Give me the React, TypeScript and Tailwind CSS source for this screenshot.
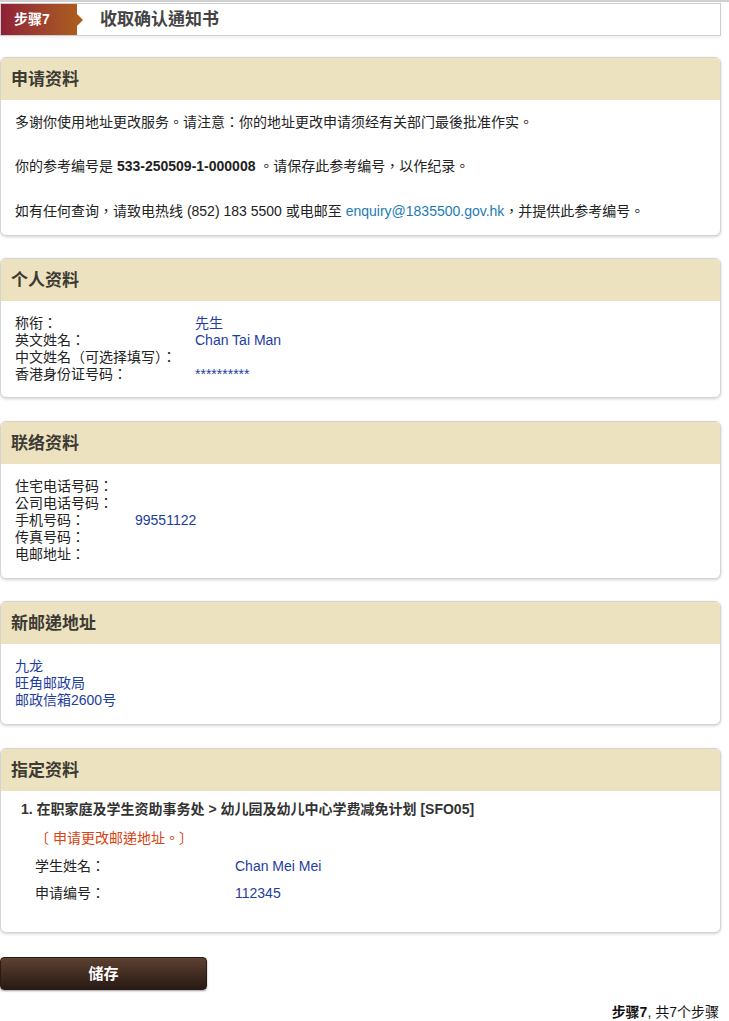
import React from "react";

const font = { fontFamily: '"Liberation Sans", Arial, "Noto Sans CJK TC", "Noto Sans CJK SC", sans-serif' };

function Card({ title, children, bodyClass }: { title: string; children: React.ReactNode; bodyClass?: string }) {
  return (
    <div className="rounded-[6px] border border-[#d4d4d4] bg-white shadow-[0_1px_3px_rgba(0,0,0,0.18)] overflow-hidden">
      <div className="h-[42px] bg-[#ece2bf] flex items-center pl-[10px] text-[17px] font-bold text-[#3d3a33]">{title}</div>
      <div className={bodyClass ?? "px-[14px] py-[14px]"}>{children}</div>
    </div>
  );
}

function Row({ label, value, w }: { label: string; value?: string; w: string }) {
  return (
    <div className="flex h-[17px] items-center">
      <div className={w + " shrink-0 text-[#222]"}>{label}</div>
      <div className="text-[#1d3da0]">{value}</div>
    </div>
  );
}

export default function App() {
  return (
    <div style={font} className="w-[721px] bg-white text-[14px] text-[#222] leading-[17px]">
      <div className="h-[2px] w-[729px] bg-[#d0d0d0]" />
      <div className="mt-[1px] h-[33px] border border-[#cfcfcf] flex items-stretch shadow-[0_2px_3px_rgba(0,0,0,0.06)]">
        <div className="relative w-[76px] bg-gradient-to-r from-[#8e1f36] to-[#ab5c1d] flex items-center pl-[13px] text-white font-bold text-[14px]">
          步骤7
          <div className="absolute right-[-6px] top-[10px] w-0 h-0 border-t-[6px] border-b-[6px] border-l-[6px] border-t-transparent border-b-transparent border-l-[#ab5c1d]" />
        </div>
        <div className="flex items-center pl-[23px] text-[17px] font-bold text-[#444]">收取确认通知书</div>
      </div>

      <div className="mt-[21px] flex flex-col gap-[22px]">
        <Card title="申请资料" bodyClass="px-[14px] pt-[14px] pb-[15px]">
          <p>多谢你使用地址更改服务。请注意：你的地址更改申请须经有关部门最後批准作实。</p>
          <p className="mt-[27px]">
            你的参考编号是 <span className="font-bold">533-250509-1-000008</span> 。请保存此参考编号，以作纪录。
          </p>
          <p className="mt-[28px]">
            如有任何查询，请致电热线 (852) 183 5500 或电邮至 <span className="text-[#1b7bb5]">enquiry@1835500.gov.hk</span>，并提供此参考编号。
          </p>
        </Card>

        <Card title="个人资料">
          <Row label="称衔：" value="先生" w="w-[180px]" />
          <Row label="英文姓名：" value="Chan Tai Man" w="w-[180px]" />
          <Row label="中文姓名（可选择填写）：" w="w-[180px]" />
          <Row label="香港身份证号码：" value="**********" w="w-[180px]" />
        </Card>

        <div className="mt-[1px]">
          <Card title="联络资料" bodyClass="px-[14px] pt-[14px] pb-[15px]">
            <Row label="住宅电话号码：" w="w-[120px]" />
            <Row label="公司电话号码：" w="w-[120px]" />
            <Row label="手机号码：" value="99551122" w="w-[120px]" />
            <Row label="传真号码：" w="w-[120px]" />
            <Row label="电邮地址：" w="w-[120px]" />
          </Card>
        </div>

        <Card title="新邮递地址" bodyClass="px-[14px] pt-[14px] pb-[15px]">
          <div className="text-[#1d3da0]">
            <div>九龙</div>
            <div>旺角邮政局</div>
            <div>邮政信箱2600号</div>
          </div>
        </Card>

        <div className="mt-[1px]">
          <Card title="指定资料" bodyClass="pl-[20px] pt-[10px] pb-[30px]">
            <div className="font-bold text-[#333]">1. 在职家庭及学生资助事务处 &gt; 幼儿园及幼儿中心学费减免计划 [SFO05]</div>
            <div className="mt-[12px] pl-[14px] text-[#d8420f]">〔 申请更改邮递地址。〕</div>
            <div className="mt-[11px] pl-[14px] flex flex-col gap-[10px]">
              <Row label="学生姓名：" value="Chan Mei Mei" w="w-[200px]" />
              <Row label="申请编号：" value="112345" w="w-[200px]" />
            </div>
          </Card>
        </div>
      </div>

      <div className="mt-[24px]">
        <button className="w-[207px] h-[33px] rounded-[4px] bg-gradient-to-b from-[#5e4131] to-[#281a14] border border-[#2a1b14] text-white font-bold text-[15px] shadow-[0_1px_2px_rgba(0,0,0,0.4)]">
          储存
        </button>
      </div>

      <div className="mt-[14px] text-right pr-[2px] text-[14px] text-[#111]">
        <span className="font-bold">步骤7</span>, 共7个步骤
      </div>
      <div className="h-[1px] w-[729px] bg-[#d8d8d8]" />
    </div>
  );
}
